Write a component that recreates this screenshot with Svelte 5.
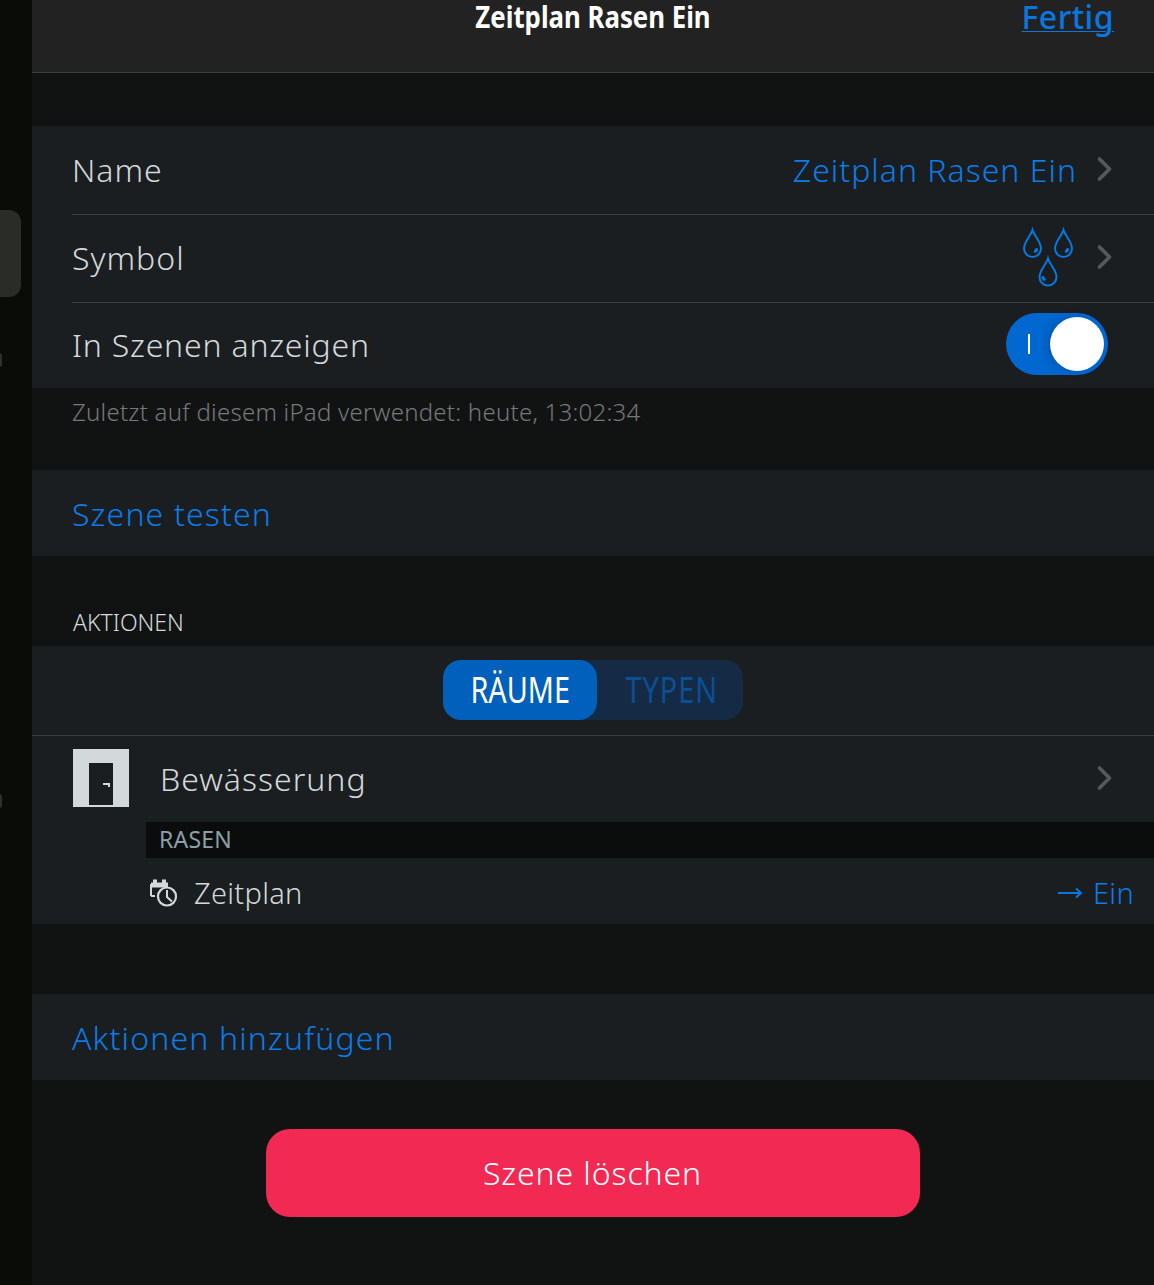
<script lang="ts">
	const drop = 'M0 -18.500 C1.500 -13 8.500 -7 8.500 0 A8.500 8.500 0 0 1 -8.500 0 C-8.500 -7 -1.500 -13 0 -18.500 Z';
</script>

{#snippet chevron()}
	<svg class="chevron" width="16" height="26" viewBox="0 0 16 26">
		<path d="M2.500 3 L12.500 13 L2.500 23" fill="none" stroke="#56585a" stroke-width="3.6" stroke-linecap="round" stroke-linejoin="round" />
	</svg>
{/snippet}

<div class="page">
	<aside class="rail">
		<div class="nub"></div>
		<div class="speck first"></div>
		<div class="speck second"></div>
	</aside>
	<main class="sheet">
		<header class="bar">
			<div class="title">Zeitplan Rasen Ein</div>
			<div class="done">Fertig</div>
		</header>

		<section class="group first_group">
			<div class="row">
				<span class="label">Name</span>
				<span class="value">Zeitplan Rasen Ein</span>
				{@render chevron()}
			</div>
			<div class="row">
				<span class="label">Symbol</span>
				<svg class="drops" width="52" height="60" viewBox="0 0 52 60">
					<g fill="none" stroke="#0878e0" stroke-width="2">
						<path d={drop} transform="translate(9.500 21.500)" />
						<path d={drop} transform="translate(40.500 21.500)" />
						<path d={drop} transform="translate(25 50)" />
					</g>
					<g fill="#0878e0">
						<ellipse cx="13" cy="23.500" rx="1.700" ry="2.700" transform="rotate(40 13 23.500)" />
						<ellipse cx="44" cy="23.500" rx="1.700" ry="2.700" transform="rotate(40 44 23.500)" />
						<ellipse cx="20.500" cy="51.500" rx="1.700" ry="2.700" transform="rotate(-40 20.500 51.500)" />
					</g>
				</svg>
				{@render chevron()}
			</div>
			<div class="row last">
				<span class="label tight">In Szenen anzeigen</span>
				<div class="toggle">
					<span class="tick"></span>
					<span class="knob"></span>
				</div>
			</div>
		</section>
		<p class="note">Zuletzt auf diesem iPad verwendet: heute, 13:02:34</p>

		<section class="group">
			<div class="row last action">Szene testen</div>
		</section>

		<div class="section_label">AKTIONEN</div>
		<section class="group">
			<div class="seg_row">
				<div class="seg">
					<div class="seg_on"><span>RÄUME</span></div>
					<div class="seg_off"><span>TYPEN</span></div>
				</div>
			</div>
			<div class="room">
				<div class="room_icon">
					<div class="door"><i></i></div>
				</div>
				<span class="room_name">Bewässerung</span>
				{@render chevron()}
			</div>
			<div class="sub">RASEN</div>
			<div class="device">
				<svg width="32" height="28" viewBox="0 0 32 28" fill="none" stroke="#d3d8db" stroke-width="2">
					<path d="M3 17 V6 H8" />
					<path d="M3 6 H20" stroke-width="5" />
					<rect x="5" y="0.500" width="4" height="4" fill="#d3d8db" stroke="none" />
					<rect x="14" y="0.500" width="4" height="4" fill="#d3d8db" stroke="none" />
					<path d="M3 17 H7" />
					<circle cx="19" cy="17.500" r="9" fill="#1a1e21" stroke-width="2.200" />
					<path d="M19 11 V18 L24 22.500" />
				</svg>
				<span class="device_name">Zeitplan</span>
				<span class="state">
					<svg width="26" height="12" viewBox="0 0 26 12" fill="none" stroke="#0878e0" stroke-width="2">
						<path d="M1 6 H24 M19 1.500 L24 6 L19 10.500" />
					</svg>
					Ein
				</span>
			</div>
		</section>

		<section class="group add_group">
			<div class="row last action">Aktionen hinzufügen</div>
		</section>

		<div class="delete_wrap">
			<button class="delete">Szene löschen</button>
		</div>
	</main>
</div>

<style>
	:global(body) {
		margin: 0;
		background: #111313;
	}
	.page {
		display: flex;
		height: 1285px;
		overflow: hidden;
		font-family: "Noto Sans", "Open Sans", sans-serif;
		font-weight: 300;
		color: #d3d8db;
	}
	.rail {
		position: relative;
		width: 32px;
		flex: none;
		background: #0a0c08;
	}
	.nub {
		position: absolute;
		left: -12px;
		top: 210px;
		width: 33px;
		height: 87px;
		border-radius: 12px;
		background: #2a2c28;
	}
	.speck {
		position: absolute;
		left: -3px;
		width: 5px;
		height: 14px;
		border-radius: 3px;
		background: #2f312e;
	}
	.speck.first {
		top: 353px;
	}
	.speck.second {
		top: 794px;
	}
	.sheet {
		flex: 1;
		min-width: 0;
		background: #111313;
	}
	.bar {
		position: relative;
		height: 72px;
		border-bottom: 1px solid #3c3c3c;
		background: #222222;
	}
	.title {
		text-align: center;
		font-size: 31px;
		line-height: 32px;
		font-weight: 700;
		color: #fff;
		transform: scaleX(0.832);
	}
	.done {
		position: absolute;
		top: -1px;
		right: 40px;
		font-size: 32px;
		line-height: 36px;
		font-weight: 500;
		letter-spacing: 0.5px;
		color: #0878e0;
		text-decoration: underline;
		text-decoration-thickness: 1px;
		text-underline-offset: 2px;
	}
	.group {
		background: #1a1e21;
	}
	.first_group {
		margin-top: 53px;
		padding-top: 1px;
	}
	.row {
		display: flex;
		align-items: center;
		margin-left: 40px;
		padding-right: 41px;
		padding-bottom: 3px;
		box-sizing: border-box;
		height: 88px;
		border-bottom: 1px solid #3a3c3f;
		font-size: 32px;
		letter-spacing: 1px;
	}
	.row.last {
		height: 85px;
		padding-bottom: 3px;
		border-bottom: 0;
	}
	.group > .row.action {
		height: 86px;
		padding-bottom: 0;
		letter-spacing: 1.15px;
		color: #0a7ce8;
	}
	.label {
		flex: 1;
	}
	.label.tight {
		letter-spacing: 0.8px;
	}
	.value {
		color: #0a7ce8;
		margin-right: 20px;
	}
	.chevron {
		flex: none;
	}
	.drops {
		margin-right: 22px;
	}
	.toggle {
		position: relative;
		width: 102px;
		height: 62px;
		margin-right: 5px;
		border-radius: 31px;
		background: #0068d0;
	}
	.tick {
		position: absolute;
		left: 22px;
		top: 21px;
		width: 2px;
		height: 20px;
		background: #fff;
	}
	.knob {
		position: absolute;
		left: 44px;
		top: 4px;
		width: 54px;
		height: 54px;
		border-radius: 50%;
		background: #fff;
		box-shadow: -4px 0 8px rgba(0, 20, 90, 0.2);
	}
	.note {
		height: 82px;
		margin: 0;
		padding: 8px 0 0 40px;
		box-sizing: border-box;
		font-size: 24px;
		line-height: 32px;
		letter-spacing: 0.25px;
		color: #75787a;
	}
	.section_label {
		height: 90px;
		padding: 51px 0 0 41px;
		box-sizing: border-box;
		font-size: 23px;
		line-height: 30px;
	}
	.seg_row {
		display: flex;
		justify-content: center;
		height: 90px;
		padding-top: 14px;
		box-sizing: border-box;
		border-bottom: 1px solid #3a3c3f;
	}
	.seg {
		display: flex;
		width: 300px;
		height: 60px;
		border-radius: 18px;
		background: #152b45;
		font-size: 36px;
		line-height: 60px;
		font-weight: 400;
	}
	.seg_on,
	.seg_off {
		display: flex;
		align-items: flex-start;
		justify-content: center;
		height: 60px;
	}
	.seg_on {
		width: 154px;
		border-radius: 18px;
		background: #0260bd;
		color: #fff;
	}
	.seg_off {
		flex: 1;
		padding-left: 3px;
		letter-spacing: 1.2px;
		color: #0b4f95;
	}
	.seg span {
		transform: scaleX(0.8);
	}
	.room {
		display: flex;
		align-items: center;
		height: 86px;
		padding: 0 41px 2px;
		box-sizing: border-box;
		font-size: 32px;
		letter-spacing: 1px;
	}
	.room_icon {
		display: flex;
		justify-content: center;
		align-items: flex-end;
		width: 56px;
		height: 58px;
		padding-bottom: 2px;
		box-sizing: border-box;
		background: #d3d8db;
	}
	.door {
		position: relative;
		width: 24px;
		height: 42px;
		background: #1a1e21;
	}
	.door i {
		position: absolute;
		left: 14px;
		top: 20px;
		width: 7px;
		height: 4px;
		box-sizing: border-box;
		border-top: 2px solid #d3d8db;
		border-right: 2px solid #d3d8db;
	}
	.room_name {
		flex: 1;
		margin-left: 31px;
	}
	.sub {
		height: 36px;
		margin-left: 114px;
		padding-left: 13px;
		background: #0b0c0c;
		font-size: 23px;
		line-height: 34px;
		letter-spacing: 0.2px;
		font-weight: 400;
		color: #8ba0a8;
	}
	.device {
		display: flex;
		align-items: center;
		height: 66px;
		padding: 3px 20px 0 116px;
		box-sizing: border-box;
		font-size: 29px;
		letter-spacing: 0.3px;
	}
	.device_name {
		flex: 1;
		margin-left: 14px;
	}
	.state {
		display: flex;
		align-items: center;
		gap: 10px;
		color: #0a7ce8;
	}
	.add_group {
		margin-top: 70px;
	}
	.delete_wrap {
		display: flex;
		justify-content: center;
		padding-top: 49px;
	}
	.delete {
		width: 654px;
		height: 88px;
		margin-right: 1px;
		padding-bottom: 3px;
		border: 0;
		border-radius: 24px;
		background: #f22952;
		color: #fff;
		font: inherit;
		font-size: 32px;
		letter-spacing: 0.9px;
	}
</style>
